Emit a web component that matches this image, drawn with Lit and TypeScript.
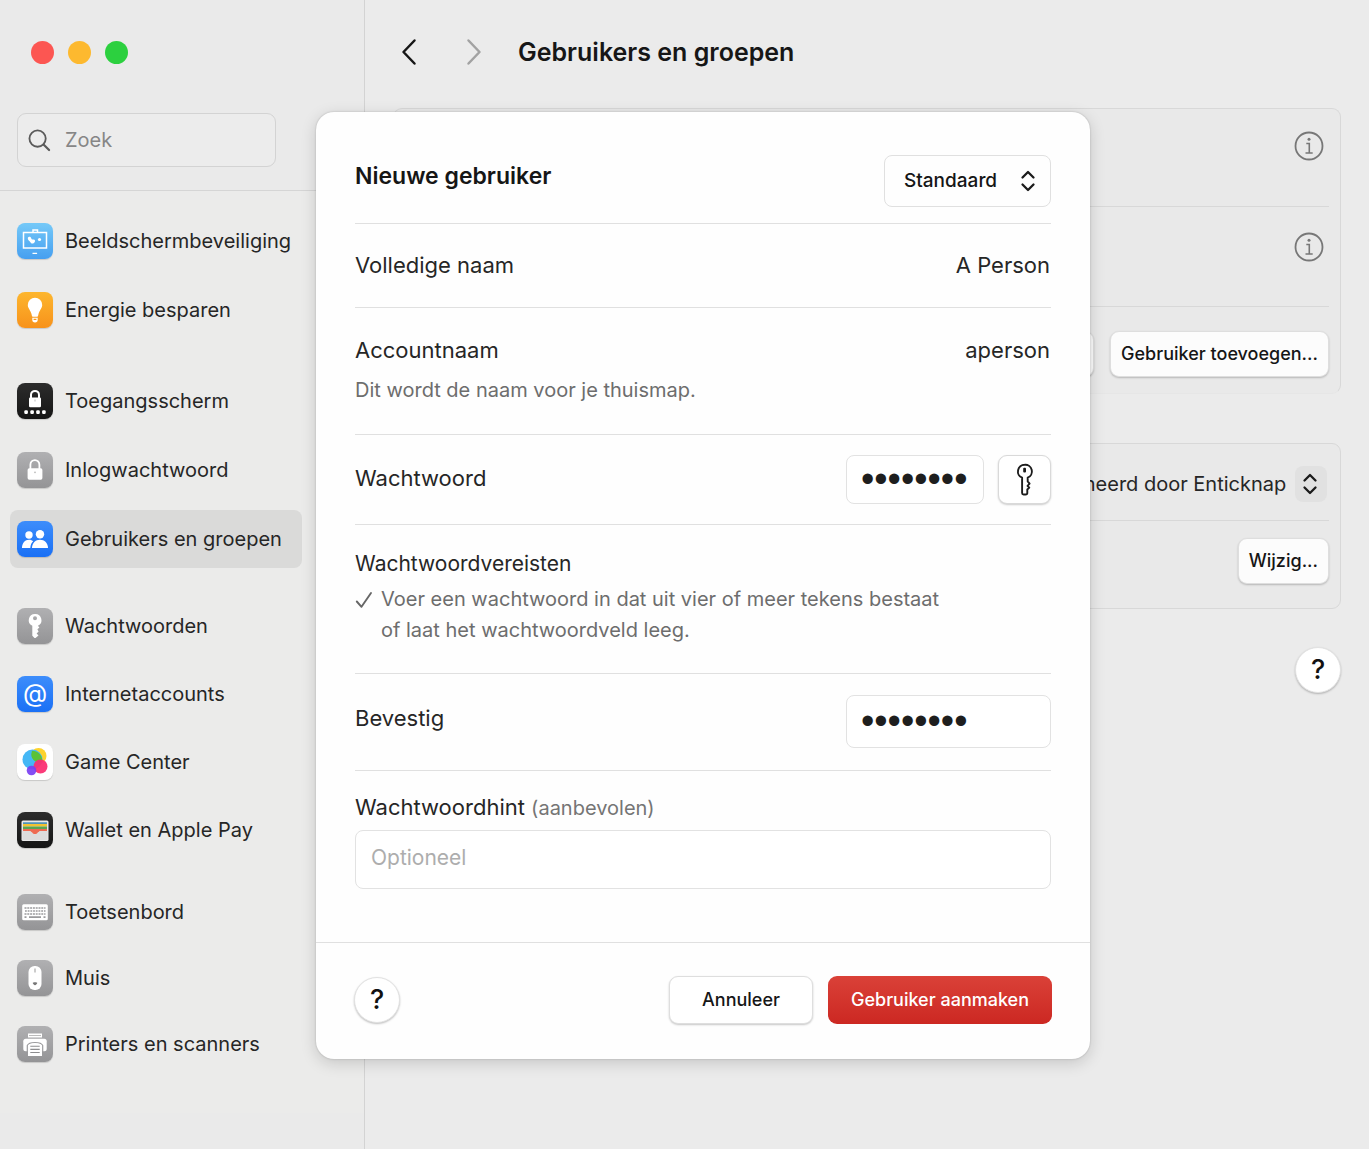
import { LitElement, html, svg, css, nothing } from "lit";
import { customElement, property } from "lit/decorators.js";
import { classMap } from "lit/directives/class-map.js";

type IconName =
  | "screensaver" | "energy" | "lockscreen" | "login" | "users" | "passwords"
  | "internet" | "game" | "wallet" | "keyboard" | "mouse" | "printer";

interface NavItem {
  icon: IconName;
  label: string;
  active?: boolean;
}

const NAV: { spacing: string; items: NavItem[] }[] = [
  {
    spacing: "display",
    items: [
      { icon: "screensaver", label: "Beeldschermbeveiliging" },
      { icon: "energy", label: "Energie besparen" },
    ],
  },
  {
    spacing: "security",
    items: [
      { icon: "lockscreen", label: "Toegangsscherm" },
      { icon: "login", label: "Inlogwachtwoord" },
      { icon: "users", label: "Gebruikers en groepen", active: true },
    ],
  },
  {
    spacing: "accounts",
    items: [
      { icon: "passwords", label: "Wachtwoorden" },
      { icon: "internet", label: "Internetaccounts" },
      { icon: "game", label: "Game Center" },
      { icon: "wallet", label: "Wallet en Apple Pay" },
    ],
  },
  {
    spacing: "devices",
    items: [
      { icon: "keyboard", label: "Toetsenbord" },
      { icon: "mouse", label: "Muis" },
      { icon: "printer", label: "Printers en scanners" },
    ],
  },
];

const GLYPHS: Record<IconName, unknown> = {
  screensaver: svg`
    <rect x="6.5" y="9.5" width="23" height="15.5" fill="none" stroke="#fff" stroke-width="1.5"/>
    <path d="M16 9V7h4.500v2" fill="none" stroke="#fff" stroke-width="1.500"/>
    <path d="M10.800 15.300c0-1.800 3.200-2.200 3.500.2.200 1 .8 1.300 2 1 1.600-.3 2.300 1.300 1.300 2.700-1 1.600-3.500 1.700-4.200 0-.3-1-2.600-1.600-2.600-3.900z" fill="#fff"/>
    <circle cx="22.500" cy="16.500" r="1.600" fill="#fff"/>
    <path d="M15.500 30.300h4.600" stroke="#fff" stroke-width="1.300"/>`,
  energy: svg`
    <path d="M18 5.700a7.200 7.200 0 0 0-7.200 7.200c0 3.400 2.800 5.100 3.700 9.200.3 1.500.6 2.700 1.200 2.700h4.600c.6 0 .9-1.200 1.200-2.700.9-4.100 3.700-5.800 3.700-9.200A7.200 7.200 0 0 0 18 5.700z" fill="#fff"/>
    <path d="M15.300 25.800h5.400v2a2.700 2.600 0 0 1-5.400 0z" fill="#fff"/>
    <path d="M16.600 27.300h2.800" stroke="#f79a1c" stroke-width="1.200"/>`,
  lockscreen: svg`
    <path d="M14 15.500v-3.600a4 4 0 0 1 8 0v3.600" fill="none" stroke="#fff" stroke-width="2"/>
    <rect x="12" y="14.500" width="12" height="9.800" rx="1.300" fill="#fff"/>
    <path d="M18 16.500v2" stroke="#aaa" stroke-width=".8"/>
    <g fill="#fff"><rect x="7.300" y="27.300" width="3.600" height="3.600" rx="1.200"/><rect x="13.300" y="27.300" width="3.600" height="3.600" rx="1.200"/><rect x="19.200" y="27.300" width="3.600" height="3.600" rx="1.200"/><rect x="25.100" y="27.300" width="3.600" height="3.600" rx="1.200"/></g>`,
  login: svg`
    <path d="M13.400 17v-4.200a4.500 4.700 0 0 1 9 0V17" fill="none" stroke="#fff" stroke-width="1.800"/>
    <rect x="10.600" y="16.300" width="14.800" height="11.500" rx="1.700" fill="#fff"/>
    <circle cx="18" cy="20.300" r=".9" fill="#bbb"/>`,
  users: svg`
    <g fill="#fff">
      <circle cx="12" cy="14" r="3.700"/><circle cx="23" cy="13.300" r="4.200"/>
      <path d="M5 27c0-5 3-8.300 7-8.300 2 0 3.300.6 4.200 1.600-1.800 1.700-2.700 3.700-2.900 6.700z"/>
      <path d="M15 27c0-5 3.500-8.300 8-8.300s8 3.300 8 8.300z"/>
    </g>`,
  passwords: svg`
    <path fill-rule="evenodd" fill="#fff" d="M18 6a6.200 6.200 0 0 0-2.700 11.800v10l2.200 2.300h1l3-2.500-1.900-2 2-2.200-1.200-2.200 2-1.800-1.500-1.600A6.200 6.200 0 0 0 18 6zm0 2.300a2 2 0 1 1 0 4 2 2 0 0 1 0-4z"/>`,
  internet: svg`<text x="18" y="26" text-anchor="middle" font-family="Inter, sans-serif" font-size="25" fill="#fff">@</text>`,
  game: svg`
    <circle cx="21.500" cy="12" r="8" fill="#fdd32c"/>
    <circle cx="15.500" cy="15.500" r="10" fill="#45b7f5"/>
    <path d="M14.800 6.700a10 10 0 0 1 10.400 11.300 8 8 0 0 1-10.400-10.200z" fill="#5bc236"/>
    <circle cx="23.500" cy="22.500" r="7" fill="#fb2f72" opacity=".94"/>
    <circle cx="14.500" cy="26.500" r="4.800" fill="#7a3ff2" opacity=".92"/>`,
  wallet: svg`
    <rect x="4.500" y="8.500" width="27" height="20.500" rx="1.500" fill="#e9e9e9"/>
    <path d="M6 10.300h24v2.200H6z" fill="#4f93b8"/>
    <path d="M6 12h24v2.600H6z" fill="#f2c230"/>
    <path d="M6 14.500h24v2.600H6z" fill="#5aa552"/>
    <path d="M6 17h24v3H6z" fill="#ee6a52"/>
    <path d="M5.500 19h8c1 0 2 3.200 4.500 3.200s3.500-3.200 4.500-3.200h8v9h-25z" fill="#dcdcdc"/>
    <path d="M13.500 18.900h9c-1 0-2 3.200-4.500 3.200s-3.500-3.200-4.500-3.200z" fill="#ee6a52"/>`,
  keyboard: svg`
    <rect x="5.200" y="10.300" width="25.600" height="16" rx="1.500" fill="#fff"/>
    <g stroke="#9b9b9d" stroke-width="1.700" fill="none">
      <path d="M7.500 14h21" stroke-dasharray="2 .8"/><path d="M8 17h20.500" stroke-dasharray="1.800 .9"/>
      <path d="M7.500 20h21" stroke-dasharray="2 .8"/><path d="M7.500 23.200h2M12 23.200h12M26.500 23.200h2"/>
    </g>`,
  mouse: svg`
    <rect x="11.500" y="6" width="13" height="24" rx="6" fill="#fff"/>
    <path d="M18 8.500v4" stroke="#999" stroke-width="1"/>
    <path d="M15.800 22.800c.5-.8 3.900-.8 4.400 0 .3.900-1.500 2.500-2.200 2.500s-2.500-1.600-2.200-2.500z" fill="#777"/>`,
  printer: svg`
    <path d="M11 7.500h14v4H11z" fill="#fff"/><path d="M12 9.500h12" stroke="#aaa" stroke-width=".8"/>
    <rect x="6.300" y="12.800" width="23.400" height="12.500" rx="2.500" fill="#fff"/>
    <path d="M10.300 30V19.500c1-2.500 3.500-3 7.700-3s6.700.5 7.700 3V30" fill="none" stroke="#9b9b9d" stroke-width="1.200"/>
    <path d="M11 30V19.700c1-1.900 3.300-2.300 7-2.300s6 .4 7 2.300V30z" fill="#fff"/>
    <path d="M13.300 20.300h9.400M13.300 23.400h9.400M13.300 26.500h9.400" stroke="#8d8d8f" stroke-width="1.100"/>`,
};

const updown = html`<svg class="updown" viewBox="0 0 16 24" width="16" height="24" aria-hidden="true">
  <path d="M2.500 8.500 8 3l5.500 5.500M2.500 15.500 8 21l5.500-5.500" fill="none" stroke="#1b1b1b" stroke-width="2.300" stroke-linecap="round" stroke-linejoin="round"/>
</svg>`;

const shared = css`
  :host { font-family: Inter, "Liberation Sans", sans-serif; color: #262626; }
  *, *::before, *::after { box-sizing: border-box; }
  button, input, select { font: inherit; color: inherit; margin: 0; }
  svg { display: block; flex: none; }
  .push {
    height: 46px; padding: 0 10px; border: 1px solid #dedede; border-radius: 9px;
    background: #fcfcfc; color: #161616; font-size: 18px; font-weight: 500; line-height: 24px;
    white-space: nowrap; box-shadow: 0 1px 2px rgba(0, 0, 0, 0.22);
  }
  .help {
    width: 46px; height: 46px; padding: 0; border: 1px solid #e2e2e2; border-radius: 50%;
    background: #fff; color: #111; font-size: 27px; font-weight: 500; line-height: 32px;
    box-shadow: 0 1px 2px rgba(0, 0, 0, 0.25);
  }
  .picker { position: relative; display: flex; align-items: center; }
  .picker select { appearance: none; border: 0; background: transparent; }
  .picker .updown { position: absolute; pointer-events: none; }
`;

@customElement("settings-icon")
export class SettingsIcon extends LitElement {
  @property() name: IconName = "users";

  static styles = css`
    :host { display: block; flex: none; }
    .tile {
      width: 36px; height: 36px; border-radius: 8px; overflow: hidden;
      background: linear-gradient(#b0b0b2, #949496); box-shadow: 0 1px 1px rgba(0, 0, 0, 0.15);
    }
    svg { display: block; }
    .screensaver { background: linear-gradient(#75c9f8, #469ff0); }
    .energy { background: linear-gradient(#fdb62e, #f7921b); }
    .lockscreen, .wallet { background: linear-gradient(#2c2c2c, #151515); }
    .users, .internet { background: linear-gradient(#3d8dfb, #1a70f5); }
    .game { background: #fff; }
  `;

  render() {
    return html`<div class="tile ${this.name}">
      <svg viewBox="0 0 36 36" width="36" height="36" aria-hidden="true">${GLYPHS[this.name]}</svg>
    </div>`;
  }
}

@customElement("settings-sidebar")
export class SettingsSidebar extends LitElement {
  static styles = [shared, css`
    :host { display: block; border-right: 1px solid #d3d3d3; background: #eaeaea; }
    .top { padding: 41px 88px 23px 17px; border-bottom: 1px solid #d5d5d5; }
    .lights { display: flex; gap: 14px; padding-left: 14px; margin-bottom: 49px; }
    .light { width: 23px; height: 23px; padding: 0; border: 0; border-radius: 50%; }
    .close { background: #fc5652; }
    .minimise { background: #fdb92f; }
    .zoom { background: #2cd03f; }
    .search {
      display: flex; align-items: center; gap: 14px; height: 54px; padding: 0 10px;
      border: 1px solid #d3d3d3; border-radius: 9px; background: #ececec;
    }
    .search input {
      flex: 1; min-width: 0; padding: 0; border: 0; outline: 0; background: transparent;
      font-size: 20px; line-height: 28px;
    }
    .search input::placeholder { color: #868686; opacity: 1; }
    nav { padding: 21px 62px 40px 10px; background: #ebebea; }
    ul { display: flex; flex-direction: column; margin: 0; padding: 0; list-style: none; }
    ul.display { gap: 11px; margin-bottom: 33px; }
    ul.security { gap: 11px; margin-bottom: 29px; }
    ul.accounts { gap: 10px; margin-bottom: 24px; }
    ul.devices { gap: 8px; }
    a {
      display: flex; align-items: center; gap: 12px; height: 58px; padding: 0 7px;
      border-radius: 8px; color: inherit; text-decoration: none; font-size: 20px; line-height: 26px;
      white-space: nowrap;
    }
    a.active { background: #dadad9; }
  `];

  render() {
    return html`
      <div class="top">
        <div class="lights">
          <button class="light close" aria-label="Sluit"></button>
          <button class="light minimise" aria-label="Minimaliseer"></button>
          <button class="light zoom" aria-label="Vergroot"></button>
        </div>
        <label class="search">
          <svg viewBox="0 0 24 24" width="23" height="23" aria-hidden="true">
            <circle cx="10" cy="10" r="8.500" fill="none" stroke="#5a5a5a" stroke-width="1.900"/>
            <path d="m16.200 16.200 5.800 5.800" stroke="#5a5a5a" stroke-width="2.300" stroke-linecap="round"/>
          </svg>
          <input type="search" placeholder="Zoek" aria-label="Zoek" />
        </label>
      </div>
      <nav>
        ${NAV.map((group) => html`<ul class=${group.spacing}>
          ${group.items.map((item) => html`<li>
            <a href="#" class=${classMap({ active: !!item.active })} aria-current=${item.active ? "page" : nothing}>
              <settings-icon name=${item.icon}></settings-icon><span>${item.label}</span>
            </a>
          </li>`)}
        </ul>`)}
      </nav>
    `;
  }
}

@customElement("users-pane")
export class UsersPane extends LitElement {
  static styles = [shared, css`
    :host { display: block; background: #ebebeb; min-width: 0; }
    header { display: flex; align-items: center; height: 108px; padding: 0 28px 4px; }
    .navs { display: flex; }
    .nav { width: 65px; height: 40px; padding: 0 8px; border: 0; background: none; }
    h1 { margin: 0 0 0 -5px; font-size: 25px; line-height: 32px; font-weight: 600; color: #161616; }
    .body { display: flex; flex-direction: column; padding: 0 28px; }
    .card { border: 1px solid #d8d8d8; border-radius: 9px; padding: 0 11px; background: #e9e9e9; }
    .accounts { margin-bottom: 49px; border-bottom-color: #e6e6e6; }
    .person { display: flex; justify-content: flex-end; height: 98px; padding: 22px 5px 0; border-bottom: 1px solid #d8d8d8; }
    .person + .person { height: 100px; padding-top: 25px; }
    .info { width: 30px; height: 30px; padding: 0; border: 0; background: none; }
    .actions { display: flex; justify-content: flex-end; gap: 16px; padding: 24px 0 16px; }
    .server { display: flex; justify-content: flex-end; align-items: center; height: 77px; padding: 4px 2px 0; border-bottom: 1px solid #d8d8d8; }
    .server .picker select { height: 36px; padding: 0 40px 0 0; font-size: 20px; line-height: 26px; }
    .server .picker::after { content: ""; position: absolute; right: 0; width: 32px; height: 36px; border-radius: 8px; background: #e1e1e1; }
    .server .updown { right: 9px; z-index: 1; }
    .change { display: flex; justify-content: flex-end; padding: 17px 0 24px; }
    .assist { display: flex; justify-content: flex-end; padding-top: 38px; }
  `];

  private info() {
    return html`<button class="info" aria-label="Info">
      <svg viewBox="0 0 30 30" width="30" height="30" aria-hidden="true">
        <circle cx="15" cy="15" r="13.500" fill="none" stroke="#777" stroke-width="1.800"/>
        <circle cx="15" cy="8.300" r="1.500" fill="#777"/>
        <path d="M12.300 12.500h3v9.500M11.500 22h7.200" fill="none" stroke="#777" stroke-width="1.600"/>
      </svg>
    </button>`;
  }

  render() {
    return html`
      <header>
        <div class="navs">
          <button class="nav" aria-label="Vorige">
            <svg viewBox="0 0 16 28" width="16" height="28" aria-hidden="true"><path d="M13.500 2.500 2.500 14l11 11.500" fill="none" stroke="#161616" stroke-width="2.500" stroke-linecap="round" stroke-linejoin="round"/></svg>
          </button>
          <button class="nav" aria-label="Volgende">
            <svg viewBox="0 0 16 28" width="16" height="28" aria-hidden="true"><path d="m2.500 2.500 11 11.500-11 11.500" fill="none" stroke="#a2a2a2" stroke-width="2.500" stroke-linecap="round" stroke-linejoin="round"/></svg>
          </button>
        </div>
        <h1>Gebruikers en groepen</h1>
      </header>
      <div class="body">
        <section class="card accounts">
          <div class="person">${this.info()}</div>
          <div class="person">${this.info()}</div>
          <div class="actions">
            <button class="push">Groep toevoegen...</button>
            <button class="push">Gebruiker toevoegen...</button>
          </div>
        </section>
        <section class="card">
          <div class="server">
            <div class="picker">
              <select aria-label="Beheer"><option>Beheerd door Enticknap</option></select>
              ${updown}
            </div>
          </div>
          <div class="change"><button class="push">Wijzig...</button></div>
        </section>
        <div class="assist"><button class="help" aria-label="Help">?</button></div>
      </div>
    `;
  }
}

@customElement("new-user-sheet")
export class NewUserSheet extends LitElement {
  static styles = [shared, css`
    :host {
      display: block; width: 100%; max-width: 774px; border-radius: 18px; background: #fefefe;
      box-shadow: 0 0 2px rgba(0, 0, 0, 0.22), 0 4px 16px rgba(0, 0, 0, 0.16); font-size: 22px; line-height: 28px;
    }
    .fields { padding: 0 39px; }
    .row { display: flex; justify-content: space-between; border-bottom: 1px solid #e0e0e0; }
    h2 { margin: 0; font-size: 23px; line-height: 30px; font-weight: 600; color: #161616; }
    .head { height: 112px; padding-top: 43px; }
    .head h2 { padding-top: 6px; }
    .role { border: 1px solid #e0e0e0; border-radius: 8px; height: 52px; }
    .role select { height: 50px; padding: 0 52px 0 19px; font-size: 19px; font-weight: 500; color: #161616; }
    .role .updown { right: 14px; }
    .name { height: 84px; align-items: center; padding-bottom: 2px; }
    .value { flex: 1; min-width: 0; padding: 0 1px; border: 0; outline: 0; background: none; text-align: right; }
    .account { height: 127px; flex-direction: column; justify-content: flex-start; padding-top: 28px; gap: 13px; }
    .line { display: flex; }
    .note { margin: 0; font-size: 20px; line-height: 26px; color: #6d6d6d; }
    .password { height: 90px; padding: 20px 0; }
    .password label, .confirm label { padding-top: 9px; }
    .group { display: flex; gap: 14px; }
    .secret {
      border: 1px solid #e2e2e2; border-radius: 8px; background: #fff; outline: 0; padding: 0 14px;
      font-family: "Liberation Sans", sans-serif; font-size: 38px; color: #1e1e1e;
    }
    .short { width: 138px; height: 49px; }
    .long { width: 205px; height: 53px; }
    .key {
      display: grid; place-items: center; width: 53px; height: 49px; padding: 0;
      border: 1px solid #d9d9d9; border-radius: 9px; background: #fff; box-shadow: 0 1px 2px rgba(0, 0, 0, 0.2);
    }
    .rules { height: 149px; flex-direction: column; justify-content: flex-start; padding-top: 25px; gap: 7px; }
    h3 { margin: 0; font-size: 21px; line-height: 27px; font-weight: 400; }
    .rule { display: flex; gap: 8px; }
    .rule svg { margin-top: 7px; }
    .rule p { margin: 0; font-size: 20px; line-height: 31px; color: #6d6d6d; max-width: 570px; }
    .confirm { height: 97px; padding-top: 21px; }
    .hint { padding: 22px 0 53px; }
    .hint label { display: block; margin-bottom: 8px; }
    .hint small { font-size: 20px; color: #757575; }
    .hint input {
      display: block; width: 100%; height: 59px; padding: 0 15px 4px; border: 1px solid #e2e2e2;
      border-radius: 8px; background: #fff; outline: 0; font-size: 21px;
    }
    .hint input::placeholder { color: #adadad; opacity: 1; }
    footer {
      display: flex; align-items: center; gap: 15px; padding: 33px 38px 35px;
      border-top: 1px solid #e0e0e0;
    }
    footer .help { margin-right: auto; }
    footer .push { height: 48px; }
    .cancel { width: 144px; background: #fff; }
    .push.create {
      width: 224px; border: 0; color: #fff; background: linear-gradient(#da4138, #cc2822); box-shadow: none;
    }
  `];

  render() {
    return html`
      <form @submit=${(e: Event) => e.preventDefault()}>
        <div class="fields">
          <div class="row head">
            <h2>Nieuwe gebruiker</h2>
            <div class="picker role">
              <select aria-label="Type gebruiker"><option>Standaard</option></select>
              ${updown}
            </div>
          </div>
          <div class="row name">
            <label for="full">Volledige naam</label>
            <input class="value" id="full" value="A Person" />
          </div>
          <div class="row account">
            <div class="line">
              <label for="account">Accountnaam</label>
              <input class="value" id="account" value="aperson" />
            </div>
            <p class="note">Dit wordt de naam voor je thuismap.</p>
          </div>
          <div class="row password">
            <label for="pw">Wachtwoord</label>
            <div class="group">
              <input class="secret short" id="pw" type="password" value="abcdefgh" />
              <button class="key" type="button" aria-label="Wachtwoordassistent">
                <svg viewBox="0 0 20 34" width="20" height="34" aria-hidden="true">
                  <path d="M9.600 1.800a6.700 6.700 0 0 0-2.500 12.900V30q0 1.500 1.500 1.500h2q1.700 0 1.700-1.500v-3.500l2-1.900-1.800-1.800 2.100-2.100-1.900-2.300v-3.700A6.700 6.700 0 0 0 9.600 1.800z" fill="none" stroke="#1c1c1c" stroke-width="1.900" stroke-linejoin="round"/>
                  <rect x="8.200" y="4.800" width="2.800" height="4.600" rx="1" fill="#1c1c1c"/>
                </svg>
              </button>
            </div>
          </div>
          <div class="row rules">
            <h3>Wachtwoordvereisten</h3>
            <div class="rule">
              <svg viewBox="0 0 18 18" width="18" height="18" aria-hidden="true"><path d="m1.800 10.500 4.700 5.300L16 2" fill="none" stroke="#666" stroke-width="1.900" stroke-linecap="round" stroke-linejoin="round"/></svg>
              <p>Voer een wachtwoord in dat uit vier of meer tekens bestaat of laat het wachtwoordveld leeg.</p>
            </div>
          </div>
          <div class="row confirm">
            <label for="again">Bevestig</label>
            <input class="secret long" id="again" type="password" value="abcdefgh" />
          </div>
          <div class="hint">
            <label for="hint">Wachtwoordhint <small>(aanbevolen)</small></label>
            <input id="hint" placeholder="Optioneel" />
          </div>
        </div>
        <footer>
          <button class="help" type="button" aria-label="Help">?</button>
          <button class="push cancel" type="button">Annuleer</button>
          <button class="push create" type="submit">Gebruiker aanmaken</button>
        </footer>
      </form>
    `;
  }
}

@customElement("app-root")
export class AppRoot extends LitElement {
  static styles = css`
    :host { display: block; position: relative; }
    .window { display: grid; grid-template-columns: 365px minmax(0, 1fr); min-height: 100vh; }
    .overlay {
      position: absolute; inset: 0; display: flex; justify-content: center; align-items: flex-start;
      padding: 112px 0 0 37px;
    }
  `;

  render() {
    return html`
      <div class="window">
        <settings-sidebar></settings-sidebar>
        <users-pane></users-pane>
      </div>
      <div class="overlay" role="dialog" aria-label="Nieuwe gebruiker">
        <new-user-sheet></new-user-sheet>
      </div>
    `;
  }
}
